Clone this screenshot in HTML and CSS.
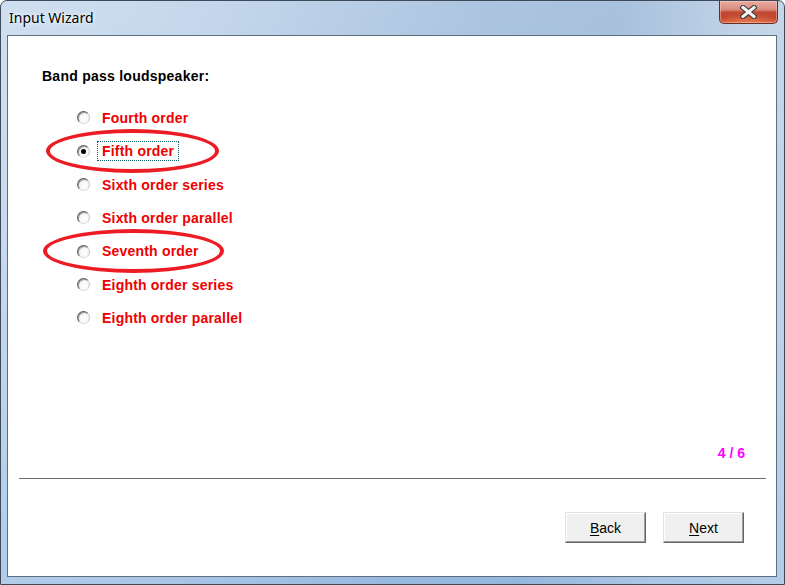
FILE: index.html
```html
<!DOCTYPE html>
<html>
<head>
<meta charset="utf-8">
<link rel="stylesheet" href="styles.css">
</head>
<body>
<div class="window">
  <div class="titlebar">
    <span class="title">Input Wizard</span>
    <div class="close">
      <svg width="17" height="14" viewBox="0 0 17 14">
        <path d="M3 2.5 L14 11.5 M14 2.5 L3 11.5" stroke="#3c3c3c" stroke-width="5.2" stroke-linecap="square" fill="none"/>
        <path d="M3 2.5 L14 11.5 M14 2.5 L3 11.5" stroke="#f4f4f4" stroke-width="3" stroke-linecap="square" fill="none"/>
      </svg>
    </div>
  </div>
  <div class="client">
    <div class="heading">Band pass loudspeaker:</div>
    <ul class="options">
      <li class="opt"><span class="radio"></span><span class="label">Fourth order</span></li>
      <li class="opt"><span class="radio checked"></span><span class="label focus">Fifth order</span></li>
      <li class="opt"><span class="radio"></span><span class="label">Sixth order series</span></li>
      <li class="opt"><span class="radio"></span><span class="label">Sixth order parallel</span></li>
      <li class="opt"><span class="radio"></span><span class="label">Seventh order</span></li>
      <li class="opt"><span class="radio"></span><span class="label">Eighth order series</span></li>
      <li class="opt"><span class="radio"></span><span class="label">Eighth order parallel</span></li>
    </ul>
    <div class="spacer"></div>
    <div class="page">4 / 6</div>
    <div class="sep"></div>
    <div class="buttons">
      <button class="btn"><u>B</u>ack</button>
      <button class="btn"><u>N</u>ext</button>
    </div>
    <div class="mark mark-one"></div>
    <div class="mark mark-two"></div>
  </div>
</div>
</body>
</html>
```
FILE: styles.css
```css
html, body {
  margin: 0;
  padding: 0;
  background: #ffffff;
}
.window {
  width: 785px;
  height: 585px;
  box-sizing: border-box;
  border: 1px solid #3e4a5a;
  border-radius: 7px 7px 0 0;
  background:
    linear-gradient(180deg, rgba(255,255,255,0.10) 0%, rgba(255,255,255,0) 40%, rgba(120,170,225,0.25) 100%),
    linear-gradient(100deg, #cadcef 0%, #bdd2e9 25%, #a3bedd 55%, #9fbad9 70%, #bcd0e6 85%, #c6d8ec 100%);
  display: flex;
  flex-direction: column;
  overflow: hidden;
}
.titlebar {
  height: 34px;
  display: flex;
  justify-content: space-between;
  align-items: flex-start;
}
.title {
  font-family: "Noto Sans", "DejaVu Sans", sans-serif;
  font-size: 14px;
  line-height: 16px;
  color: #000000;
  margin: 9px 0 0 8px;
  text-shadow: 0 0 6px rgba(255,255,255,0.9), 0 0 3px rgba(255,255,255,0.9);
}
.close {
  width: 59px;
  height: 23px;
  margin-right: 6px;
  box-sizing: border-box;
  border: 1px solid #6a2c22;
  border-top: none;
  border-radius: 0 0 5px 5px;
  background:
    radial-gradient(ellipse 60% 45% at 50% 100%, rgba(240,140,90,0.7), rgba(240,140,90,0) 100%),
    linear-gradient(180deg, #e8aca2 0%, #d98a7c 40%, #c24a33 50%, #c0452e 75%, #cf5a3b 100%);
  box-shadow: inset 0 0 0 1px rgba(255,210,200,0.45);
  display: flex;
  align-items: center;
  justify-content: center;
}
.close svg {
  display: block;
}
.client {
  position: relative;
  flex: 1;
  margin: 0 7px 7px 6px;
  border: 1px solid #5f6f82;
  background: #ffffff;
  display: flex;
  flex-direction: column;
  padding: 32px 0 33px 0;
  font-family: "Liberation Sans", Arial, sans-serif;
  font-size: 14px;
  line-height: 16px;
}
.heading {
  font-weight: bold;
  color: #000000;
  margin-left: 34px;
  letter-spacing: 0.25px;
}
.options {
  list-style: none;
  margin: 17px 0 0 69px;
  padding: 0;
}
.opt {
  height: 33px;
  display: flex;
  align-items: center;
}
.opt:nth-child(3n+2) {
  height: 34px;
}
.radio {
  width: 13px;
  height: 13px;
  box-sizing: border-box;
  border-radius: 50%;
  border: 1px solid;
  border-color: #5e5e5e #c8c8c8 #dcdcdc #5e5e5e;
  background: radial-gradient(circle at 60% 60%, #ffffff 0%, #f4f4f4 60%, #dcdcdc 100%);
  box-shadow: inset 1px 1px 0 #9a9a9a;
  margin-right: 7px;
  display: flex;
  align-items: center;
  justify-content: center;
}
.radio.checked::after {
  content: "";
  width: 5px;
  height: 5px;
  border-radius: 50%;
  background: #000000;
}
.label {
  font-weight: bold;
  color: #f00000;
  padding: 1px 4px;
  border: 1px solid transparent;
  letter-spacing: 0.2px;
}
.label.focus {
  border: 1px dotted #0b5f66;
}
.spacer {
  flex: 1;
}
.page {
  font-weight: bold;
  color: #ff00ff;
  text-align: right;
  margin-right: 31px;
}
.sep {
  height: 1px;
  background: #6d6d6d;
  margin: 17px 10px 0 11px;
}
.buttons {
  display: flex;
  justify-content: flex-end;
  gap: 17px;
  margin: 33px 32px 0 0;
}
.btn {
  width: 81px;
  height: 31px;
  box-sizing: border-box;
  font-family: "Liberation Sans", Arial, sans-serif;
  font-size: 14px;
  color: #000000;
  background: #f0f0f0;
  border: 1px solid;
  border-color: #e3e3e3 #646464 #646464 #e3e3e3;
  box-shadow: inset -1px -1px 0 #a0a0a0, inset 1px 1px 0 #ffffff;
  padding: 0;
}
.btn u {
  text-decoration-thickness: 1px;
  text-underline-offset: 2px;
}
.mark {
  position: absolute;
  box-sizing: border-box;
  border: 4px solid #ed1c24;
  border-radius: 50%;
}
.mark-one {
  left: 38px;
  top: 93px;
  width: 173px;
  height: 44px;
}
.mark-two {
  left: 35px;
  top: 193px;
  width: 181px;
  height: 44px;
}
```
